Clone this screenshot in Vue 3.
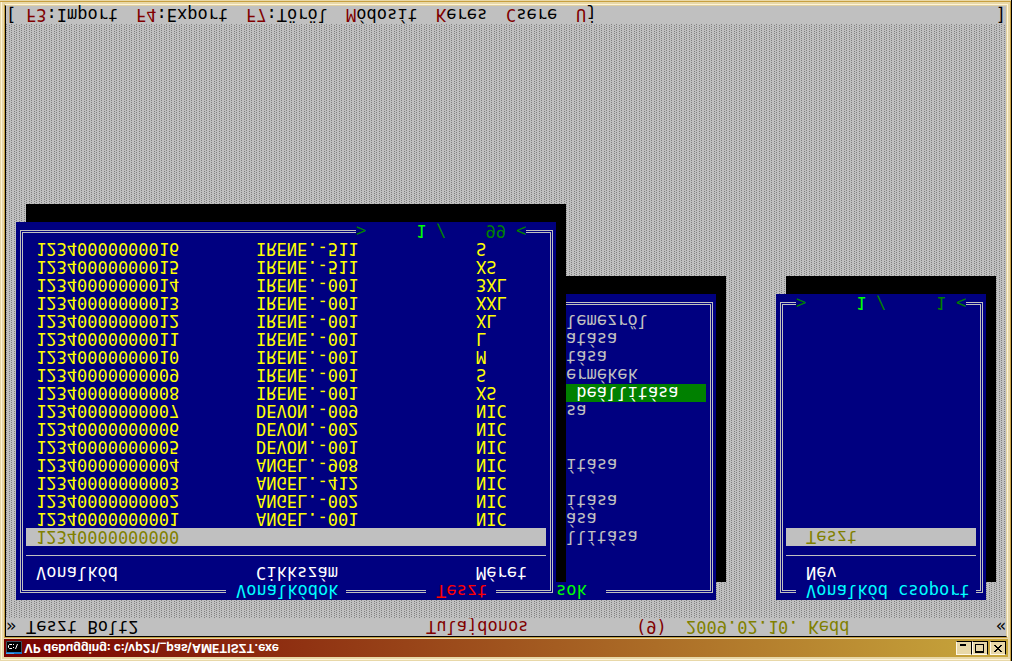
<script setup>
const codes = [
  ['12340000000000', '', ''],
  ['12340000000001', 'ANGEL.-001', 'NIC'],
  ['12340000000002', 'ANGEL.-002', 'NIC'],
  ['12340000000003', 'ANGEL.-412', 'NIC'],
  ['12340000000004', 'ANGEL.-908', 'NIC'],
  ['12340000000005', 'DEVON.-001', 'NIC'],
  ['12340000000006', 'DEVON.-002', 'NIC'],
  ['12340000000007', 'DEVON.-009', 'NIC'],
  ['12340000000008', 'IRENE.-001', 'XS'],
  ['12340000000009', 'IRENE.-001', 'S'],
  ['12340000000010', 'IRENE.-001', 'M'],
  ['12340000000011', 'IRENE.-001', 'L'],
  ['12340000000012', 'IRENE.-001', 'XL'],
  ['12340000000013', 'IRENE.-001', 'XXL'],
  ['12340000000014', 'IRENE.-001', '3XL'],
  ['12340000000015', 'IRENE.-511', 'XS'],
  ['12340000000016', 'IRENE.-511', 'S'],
]

const options = [
  '', '', 'llítása', 'ása', 'ítása', '', 'ítása', '', '', 'sa',
  '\u00a0beállítása', 'ermékek', 'tása', 'atása', 'lemezről',
]
const activeOption = 10

const commands = [
  { key: 'F3', label: ':Import', cells: 11 },
  { key: 'F4', label: ':Export', cells: 11 },
  { key: 'F7', label: ':Töröl', cells: 10 },
  { key: 'M', label: 'ódosít', cells: 9 },
  { key: 'K', label: 'eres', cells: 7 },
  { key: 'C', label: 'sere', cells: 7 },
  { key: 'U', label: 'j', cells: 2 },
]
</script>

<template>
  <main class="frame">
    <header class="titlebar">
      <svg class="app-icon" viewBox="0 0 16 13" aria-hidden="true">
        <rect width="16" height="13" fill="#000" />
        <path d="M0 0H16V2H0Z" fill="#1878c8" />
        <path d="M0 0H8V1H0Z" fill="#48a8f0" />
        <path d="M.5 2V12.500H15.500V2" fill="none" stroke="#405060" />
        <path d="M6 5.500H3.500L2.500 6.500V8.500L3.500 9.500H6M7.500 6V7M7.500 9V10M9.500 5L11.500 10" fill="none" stroke="#fff" />
      </svg>
      <h1>VP debugging: c:\vp21\_pas\AMETISZT.exe</h1>
      <div class="controls">
        <button type="button" aria-label="Minimize">
          <svg viewBox="0 0 14 12"><path d="M3 8H9V10H3Z" /></svg>
        </button>
        <button type="button" aria-label="Maximize">
          <svg viewBox="0 0 14 12"><path fill-rule="evenodd" d="M2 1H11V10H2ZM3 3V9H10V3Z" /></svg>
        </button>
        <button type="button" class="close" aria-label="Close">
          <svg viewBox="0 0 14 12"><path d="M3 2H5V3H6V4H8V3H9V2H11V3H10V4H9V5H8V6H9V7H10V8H11V9H9V8H8V7H6V8H5V9H3V8H4V7H5V6H6V5H5V4H4V3H3Z" /></svg>
        </button>
      </div>
    </header>

    <div class="bezel">
      <div class="console">
        <div class="status">
          <span>»</span>
          <span>Teszt Bolt2</span>
          <span class="maroon">Tulajdonos</span>
          <span class="maroon">(9)</span>
          <span class="date olive"><span>2009.02.10.</span><span>Kedd</span></span>
          <span>«</span>
        </div>

        <section class="desktop">
          <div class="window settings">
            <div class="edge"></div>
            <h2 class="caption lime">sok</h2>
            <ul>
              <li v-for="(option, i) in options" :key="i" :class="{ active: i === activeOption }">{{ option }}</li>
            </ul>
          </div>

          <div class="window codes">
            <div class="edge"></div>
            <h2 class="caption cyan">Vonalkódok</h2>
            <span class="caption group red">Teszt</span>
            <table>
              <thead>
                <tr><th>Vonalkód</th><th>Cikkszám</th><th>Méret</th></tr>
                <tr class="rule" aria-hidden="true"><td colspan="3"></td></tr>
              </thead>
              <tbody>
                <tr v-for="(row, i) in codes" :key="row[0]" :class="{ selected: i === 0 }">
                  <td v-for="(cell, j) in row" :key="j">{{ cell }}</td>
                </tr>
              </tbody>
            </table>
            <div class="counter"><span>&gt;</span><b>1</b><span>/</span><span class="total">99</span><span>&lt;</span></div>
          </div>

          <div class="window groups">
            <div class="edge"></div>
            <h2 class="caption cyan">Vonalkód csoport</h2>
            <table>
              <thead>
                <tr><th>Név</th></tr>
                <tr class="rule" aria-hidden="true"><td></td></tr>
              </thead>
              <tbody>
                <tr class="selected"><td>Teszt</td></tr>
              </tbody>
            </table>
            <div class="counter"><span>&gt;</span><b>1</b><span>/</span><span class="total">1</span><span>&lt;</span></div>
          </div>
        </section>

        <nav class="menu">
          <span class="bracket">[</span>
          <button v-for="c in commands" :key="c.key" type="button" :style="{ width: c.cells * 10 + 'px' }"><span class="maroon">{{ c.key }}</span>{{ c.label }}</button>
          <span class="end">]</span>
        </nav>
      </div>
    </div>
  </main>
</template>

<style>
body {
  margin: 0;
}
</style>

<style scoped>
.frame {
  box-sizing: border-box;
  display: flex;
  flex-direction: column;
  min-height: 100vh;
  padding: 4px;
  background: #e8d8a8;
  box-shadow: inset -1px 0 #000, inset 0 -1px #e8d8a8, inset -2px -2px #c8a040, inset 1px 1px #e8d8a8, inset 2px 2px #fff4d8;
  transform: scaleY(-1);
}

.titlebar {
  display: flex;
  align-items: center;
  height: 18px;
  margin-bottom: 1px;
  padding: 0 2px;
  background: linear-gradient(90deg, #780000, #c8a83c);
}

.app-icon {
  width: 16px;
  height: 13px;
}

h1 {
  flex: 1;
  margin: 0 0 0 2px;
  color: #fff;
  font: bold 12px/18px Inter, "Open Sans", sans-serif;
  white-space: nowrap;
}

.controls {
  display: flex;
}

.controls button {
  box-sizing: border-box;
  width: 16px;
  height: 14px;
  padding: 0;
  border: 1px solid;
  border-color: #fff8e8 #000 #000 #fff8e8;
  background: #e8d8a8;
}

.controls .close {
  margin-left: 2px;
}

.controls svg {
  display: block;
  width: 14px;
  height: 12px;
}

.bezel {
  display: flex;
  flex: 1;
  border: 1px solid;
  border-color: #c8a040 #fff4d8 #fff4d8 #c8a040;
}

.console {
  display: flex;
  flex: 1;
  flex-direction: column;
  border: 1px solid;
  border-color: #000 #e0d0a0 #e0d0a0 #000;
  background: #c0c0c0;
  color: #000;
  font: 17px/18px "DejaVu Sans Mono", "Liberation Mono", monospace;
  white-space: pre;
}

.status {
  display: grid;
  grid-template-columns: 20px 400px 210px 50px 1fr 10px;
  height: 18px;
}

.date {
  display: flex;
  gap: 10px;
}

.desktop {
  position: relative;
  flex: 1;
  background: #c0c0c0 url("data:image/svg+xml,%3Csvg xmlns='http://www.w3.org/2000/svg' width='10' height='2' shape-rendering='crispEdges'%3E%3Cpath fill='%23808080' d='M3 0h1v1h-1zM8 0h1v1h-1zM0 1h1v1h-1zM5 1h1v1h-1z'/%3E%3C/svg%3E");
}

.window {
  position: absolute;
  top: 18px;
  box-sizing: border-box;
  padding: 18px 10px;
  background: #000080;
  box-shadow: 10px 18px #000;
}

.edge {
  position: absolute;
  inset: 7px 3px 8px 4px;
  border: 3px double #c0c0c0;
}

.settings {
  left: 540px;
  width: 170px;
  color: #c0c0c0;
}

.codes {
  left: 10px;
  width: 540px;
  color: #ffff00;
}

.groups {
  left: 770px;
  width: 210px;
  min-height: 306px;
}

.caption {
  position: absolute;
  top: 0;
  left: 20px;
  box-sizing: border-box;
  width: 180px;
  margin: 0;
  padding-left: 10px;
  background: #000080;
  font: inherit;
}

.settings .caption {
  left: 0;
  width: 60px;
}

.codes .caption {
  left: 210px;
  width: 120px;
}

.codes .group {
  left: 410px;
  width: 70px;
}

ul {
  position: relative;
  margin: 0;
  padding: 0;
  list-style: none;
}

li {
  height: 18px;
  padding-left: 10px;
}

.active {
  background: #008000;
  color: #fff;
}

table {
  position: relative;
  width: 100%;
  border-collapse: collapse;
  table-layout: fixed;
}

th,
td {
  height: 18px;
  padding: 0 0 0 10px;
  font-weight: normal;
  text-align: left;
}

th {
  color: #fff;
}

.codes th:first-child,
.codes th:nth-child(2) {
  width: 210px;
}

.groups th,
.groups td {
  padding-left: 20px;
}

.rule {
  background: linear-gradient(#c0c0c0, #c0c0c0) 0 8px / 100% 1px no-repeat;
}

.selected {
  background: #c0c0c0;
  color: #808000;
}

.counter {
  position: absolute;
  right: 30px;
  bottom: 0;
  display: grid;
  grid-template-columns: 60px 20px 20px 50px 20px;
  background: #000080;
  color: #008000;
}

.groups .counter {
  right: 20px;
}

.counter b {
  color: #00ff00;
  font-weight: normal;
}

.total {
  text-align: right;
}

.counter span:last-child {
  padding-left: 10px;
}

.menu {
  display: flex;
  height: 18px;
}

.menu button {
  padding: 0;
  border: 0;
  background: none;
  color: inherit;
  font: inherit;
  text-align: left;
  white-space: nowrap;
}

.bracket {
  width: 20px;
}

.end {
  margin-left: auto;
}

.maroon {
  color: #800000;
}

.olive {
  color: #808000;
}

.cyan {
  color: #00ffff;
}

.lime {
  color: #00ff00;
}

.red {
  color: #ff0000;
}
</style>
